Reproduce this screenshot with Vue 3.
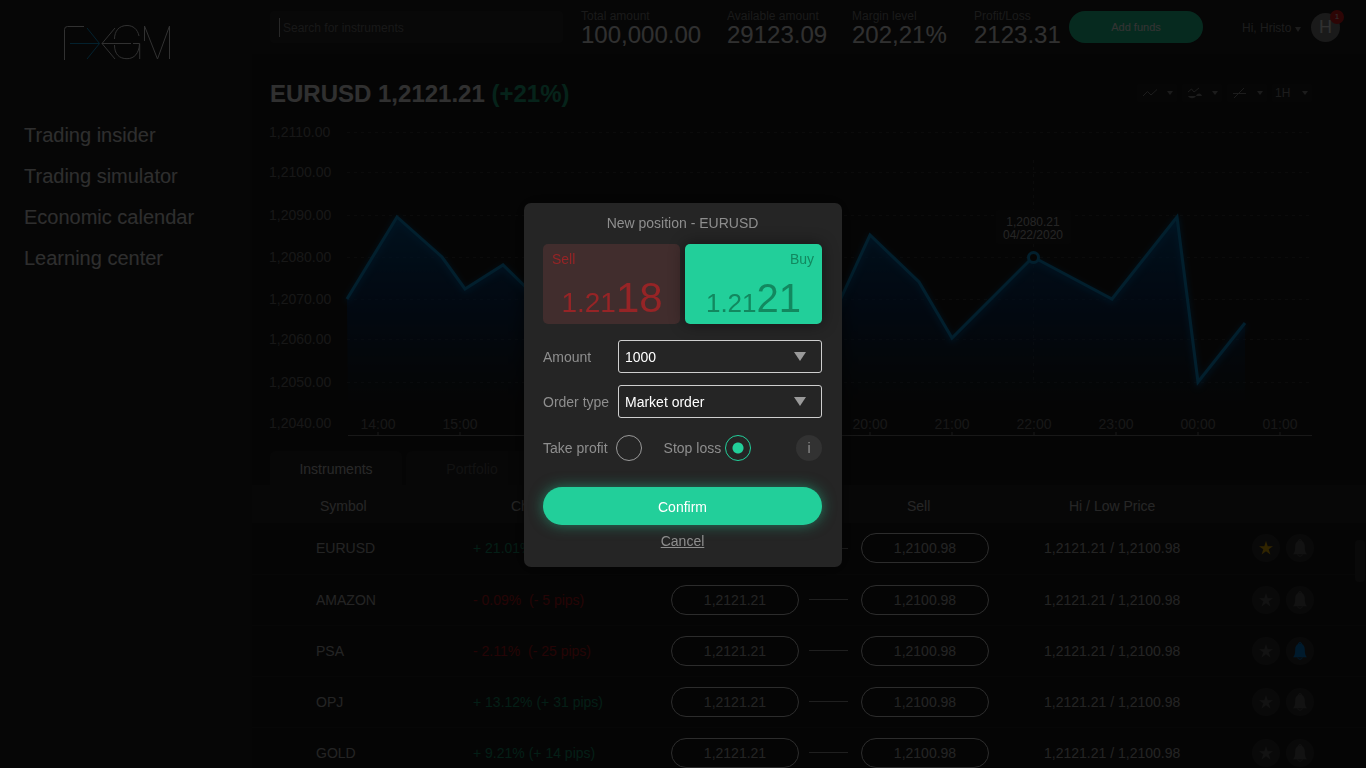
<!-- TradingDashboard -->
<template>
  <div class="dashboard">
    <aside class="sidebar">
      <svg class="logo" width="110" height="38" viewBox="62 24 110 38" role="img" aria-label="FXGM">
        <g class="logo-light">
          <path d="M64.5 60V29.5Q64.5 26.5 67.5 26.5H84" />
          <path d="M115 28L102 43.5L115 59M102 43.5H131" />
          <path d="M139 36C137.500 29 133 25.500 127 25.500C119 25.500 114.500 31 114.500 39M114.500 45C114.500 54 119 58.700 127 58.700C134.500 58.700 139 53 139.500 44" />
          <path d="M133 43.500H139.700V59" />
          <path d="M144.500 41V26L157.500 59L169.500 26V59" />
        </g>
        <path class="logo-blue" d="M70 43.5H99.5M87 28L99.5 43.5L87 59" />
      </svg>
      <nav class="menu">
        <a v-for="item in menu" :key="item" href="#">{{ item }}</a>
      </nav>
    </aside>

    <main class="main">
      <header class="topbar">
        <label class="search">
          <span class="caret"></span>
          <input type="text" placeholder="Search for instruments" aria-label="Search for instruments" />
        </label>
        <dl class="stats">
          <div v-for="stat in stats" :key="stat.label" class="stat">
            <dt>{{ stat.label }}</dt>
            <dd>{{ stat.value }}</dd>
          </div>
        </dl>
        <button type="button" class="add-funds">Add funds</button>
        <div class="user">
          <button type="button" class="user-menu">
            Hi, Hristo
            <svg width="6" height="5" viewBox="0 0 6 5"><path d="M0 0H6L3 5Z" fill="currentColor" /></svg>
          </button>
          <div class="avatar">H<span class="badge">1</span></div>
        </div>
      </header>

      <section class="chart-head">
        <h1>EURUSD 1,2121.21 <span class="up">(+21%)</span></h1>
        <div class="tools">
          <button type="button" aria-label="Chart type">
            <svg width="16" height="12" viewBox="0 0 16 12"><path class="line" d="M1 9L5.500 4.500L9 8L15 2.500" /></svg>
            <svg class="arrow" width="6" height="4" viewBox="0 0 6 4"><path d="M0 0H6L3 4Z" /></svg>
          </button>
          <button type="button" aria-label="Indicators">
            <svg width="16" height="12" viewBox="0 0 16 12">
              <path class="line" d="M1 5L4.500 2L7 5L12 1" />
              <path d="M1 9H15C14 6 11 5.500 9 9C7 12 3 12 1 9Z" />
            </svg>
            <svg class="arrow" width="6" height="4" viewBox="0 0 6 4"><path d="M0 0H6L3 4Z" /></svg>
          </button>
          <button type="button" aria-label="Drawing">
            <svg width="16" height="12" viewBox="0 0 16 12"><path class="line" d="M1 6.500H14M2 11L12 1" /></svg>
            <svg class="arrow" width="6" height="4" viewBox="0 0 6 4"><path d="M0 0H6L3 4Z" /></svg>
          </button>
          <button type="button" class="interval">
            1H
            <svg class="arrow" width="6" height="4" viewBox="0 0 6 4"><path d="M0 0H6L3 4Z" /></svg>
          </button>
        </div>
      </section>

      <!-- price chart -->
      <svg class="chart" viewBox="252 116 1114 324">
        <defs>
          <linearGradient id="area" x1="0" y1="216" x2="0" y2="405" gradientUnits="userSpaceOnUse">
            <stop offset="0" stop-color="#0067b5" stop-opacity="0.8" />
            <stop offset="0.5" stop-color="#003a85" stop-opacity="0.55" />
            <stop offset="1" stop-color="#003a70" stop-opacity="0" />
          </linearGradient>
        </defs>
        <g v-for="row in priceScale" :key="row.label">
          <text class="axis-text" x="269" :y="row.y + 5">{{ row.label }}</text>
          <line v-if="row.grid" class="grid" x1="347" x2="1309" :y1="row.y + 0.5" :y2="row.y + 0.5" />
        </g>
        <line class="grid" x1="1033.500" x2="1033.500" y1="160" y2="382" />
        <polygon :points="areaPoints" fill="url(#area)" />
        <polyline class="price-line" :points="linePoints" />
        <circle class="marker" cx="1033.500" cy="257.500" r="5" />
        <rect class="tip" x="996" y="210" width="75" height="34" rx="3" />
        <text class="tip-text" x="1033" y="226">1,2080.21</text>
        <text class="tip-text" x="1033" y="239">04/22/2020</text>
        <line class="axis" x1="348" x2="1312" y1="435.500" y2="435.500" />
        <g v-for="(hour, i) in hours" :key="hour">
          <text class="axis-text middle" :x="378 + i * 82" y="429">{{ hour }}</text>
          <line class="tick" :x1="378 + i * 82" :x2="378 + i * 82" y1="432" y2="435" />
        </g>
      </svg>

      <div class="tabs">
        <button type="button" class="tab active">Instruments</button>
        <button type="button" class="tab">Portfolio</button>
      </div>

      <div class="table-wrap">
        <table class="instruments">
          <thead>
            <tr>
              <th class="col-symbol">Symbol</th>
              <th class="col-change">Change</th>
              <th class="col-buy">Buy</th>
              <th class="col-sell">Sell</th>
              <th class="col-range">Hi / Low Price</th>
              <th></th>
            </tr>
          </thead>
          <tbody>
            <tr v-for="row in rows" :key="row.symbol">
              <td class="symbol">{{ row.symbol }}</td>
              <td class="change" :class="row.up ? 'up' : 'down'">{{ row.change }}</td>
              <td>
                <div class="buy-cell">
                  <button type="button" class="price">1,2121.21</button>
                  <span class="dash"></span>
                </div>
              </td>
              <td><button type="button" class="price">1,2100.98</button></td>
              <td class="range">1,2121.21 / 1,2100.98</td>
              <td>
                <div class="actions">
                  <button type="button" class="round" :class="{ starred: row.starred }" aria-label="Favourite">
                    <svg width="14" height="14" viewBox="0 0 14 14"><path d="M7 0L8.700 5.200H14L9.700 8.300L11.400 13.500L7 10.300L2.600 13.500L4.300 8.300L0 5.200H5.300Z" /></svg>
                  </button>
                  <button type="button" class="round" :class="{ alerted: row.alerted }" aria-label="Alert">
                    <svg width="14" height="18" viewBox="0 0 14 18">
                      <path d="M7 1.500C10.500 2 11.800 4.500 11.800 8C11.800 11.500 12.300 13.500 13.800 15.200H0.200C1.700 13.500 2.200 11.500 2.200 8C2.200 4.500 3.500 2 7 1.500Z" />
                      <circle class="ring" cx="7" cy="2" r="1.500" />
                      <path class="ring" d="M4.800 15.500C5 17.800 9 17.800 9.200 15.500" />
                    </svg>
                  </button>
                </div>
              </td>
            </tr>
          </tbody>
        </table>
        <span class="scroll-thumb"></span>
      </div>
    </main>

    <!-- new position dialog -->
    <div class="overlay">
      <form class="modal" role="dialog" aria-labelledby="modal-title" @submit.prevent>
        <h2 id="modal-title">New position - EURUSD</h2>
        <div class="sides">
          <button type="button" class="side sell">
            <span class="side-label">Sell</span>
            <span class="quote">1.21<b>18</b></span>
          </button>
          <button type="button" class="side buy">
            <span class="side-label">Buy</span>
            <span class="quote">1.21<b>21</b></span>
          </button>
        </div>
        <div class="field">
          <label for="amount">Amount</label>
          <div class="select-box">
            <select id="amount" v-model="amount">
              <option>1000</option>
              <option>5000</option>
            </select>
            <svg width="12" height="9" viewBox="0 0 12 9"><path d="M0 0H12L6 9Z" /></svg>
          </div>
        </div>
        <div class="field">
          <label for="order-type">Order type</label>
          <div class="select-box">
            <select id="order-type" v-model="orderType">
              <option>Market order</option>
              <option>Limit order</option>
            </select>
            <svg width="12" height="9" viewBox="0 0 12 9"><path d="M0 0H12L6 9Z" /></svg>
          </div>
        </div>
        <div class="options">
          <label class="take">Take profit <input v-model="exit" type="radio" name="exit" value="profit" /></label>
          <label class="stop">Stop loss <input v-model="exit" type="radio" name="exit" value="loss" /></label>
          <button type="button" class="info" aria-label="Info">i</button>
        </div>
        <button type="submit" class="confirm">Confirm</button>
        <a class="cancel" href="#">Cancel</a>
      </form>
    </div>
  </div>
</template>

<script setup>
import { ref } from "vue";

const amount = ref("1000");
const orderType = ref("Market order");
const exit = ref("loss");

const menu = ["Trading insider", "Trading simulator", "Economic calendar", "Learning center"];

const stats = [
  { label: "Total amount", value: "100,000.00" },
  { label: "Available amount", value: "29123.09" },
  { label: "Margin level", value: "202,21%" },
  { label: "Profit/Loss", value: "2123.31" },
];

const priceScale = [
  { label: "1,2110.00", y: 132, grid: true },
  { label: "1,2100.00", y: 172, grid: true },
  { label: "1,2090.00", y: 215, grid: true },
  { label: "1,2080.00", y: 257, grid: true },
  { label: "1,2070.00", y: 299, grid: true },
  { label: "1,2060.00", y: 339, grid: true },
  { label: "1,2050.00", y: 382, grid: true },
  { label: "1,2040.00", y: 423, grid: false },
];

const hours = ["14:00", "15:00", "16:00", "17:00", "18:00", "19:00", "20:00", "21:00", "22:00", "23:00", "00:00", "01:00"];

const prices = [
  [347, 299], [397, 217], [442, 257], [465, 289], [503, 265], [541, 302],
  [600, 270], [660, 320], [740, 260], [815, 355], [842, 296], [870, 235],
  [919, 282], [952, 338], [1033, 257], [1112, 299], [1177, 217], [1198, 382], [1245, 323],
];
const linePoints = prices.map((p) => p.join(",")).join(" ");
const areaPoints = `${linePoints} 1245,405 348,405`;

const rows = [
  { symbol: "EURUSD", change: "+ 21.01% (+ 50 pips)", up: true, starred: true },
  { symbol: "AMAZON", change: "- 0.09%  (- 5 pips)", up: false },
  { symbol: "PSA", change: "- 2.11%  (- 25 pips)", up: false, alerted: true },
  { symbol: "OPJ", change: "+ 13.12% (+ 31 pips)", up: true },
  { symbol: "GOLD", change: "+ 9.21% (+ 14 pips)", up: true },
];
</script>

<style>
body {
  background: #050505;
}
</style>

<style scoped>
.dashboard {
  display: flex;
  height: 100vh;
  overflow: hidden;
  background: #1b1b1b;
  color: #f0f0f0;
  font-family: "Liberation Sans", Arial, sans-serif;
  font-size: 14px;
}

button,
input,
select {
  margin: 0;
  padding: 0;
  border: 0;
  background: none;
  color: inherit;
  font: inherit;
}

/* 사이드바 */
.sidebar {
  flex: none;
  box-sizing: border-box;
  width: 252px;
  padding: 24px;
  background: #1f1f1f;
}

.logo {
  display: block;
  margin-left: 38px;
  fill: none;
  stroke-width: 1;
}

.logo-light {
  stroke: #f2f2f2;
}

.logo-blue {
  stroke: #10a6e6;
}

.menu {
  display: flex;
  flex-direction: column;
  gap: 17px;
  margin-top: 61px;
}

.menu a {
  color: #e6e6e6;
  font-size: 20px;
  line-height: 24px;
  text-decoration: none;
}

.main {
  position: relative;
  flex: 1;
  min-width: 0;
}

/* 상단 바 */
.topbar {
  display: flex;
  align-items: center;
  box-sizing: border-box;
  height: 54px;
  padding: 0 26px 0 18px;
  background: #1e1e1e;
}

.search {
  display: flex;
  flex: 1;
  align-items: center;
  height: 32px;
  margin-right: 18px;
  padding-left: 9px;
  border-radius: 4px;
  background: #2a2a2a;
}

.caret {
  width: 1px;
  height: 19px;
  margin-right: 3px;
  background: #c8c8c8;
}

.search input {
  flex: 1;
  min-width: 0;
  padding-top: 2px;
  outline: none;
  font-size: 12px;
}

.search input::placeholder {
  color: #787878;
  opacity: 1;
}

.stats {
  display: flex;
  margin: 0;
  padding-top: 2px;
}

.stat {
  width: 122px;
}

.stat:first-child {
  width: 146px;
}

.stat:nth-child(2) {
  width: 125px;
}

.stat:last-child {
  width: 95px;
}

.stat dt {
  color: #808080;
  font-size: 12px;
  line-height: 14px;
}

.stat dd {
  margin: 0;
  font-size: 24px;
  line-height: 24px;
}

.add-funds {
  width: 134px;
  height: 32px;
  border-radius: 16px;
  background: #22cf9a;
  color: #fff;
  font-size: 11px;
}

.user {
  display: flex;
  align-items: center;
  justify-content: space-between;
  width: 98px;
  margin-left: 39px;
}

.user-menu {
  padding-top: 2px;
  color: #8a8a8a;
  font-size: 12px;
}

.avatar {
  position: relative;
  width: 29px;
  height: 29px;
  border-radius: 50%;
  background: #808080;
  color: #f0f0f0;
  font-size: 18px;
  line-height: 29px;
  text-align: center;
}

.badge {
  position: absolute;
  top: -3px;
  right: -4px;
  width: 14px;
  height: 14px;
  border-radius: 50%;
  background: #e01a1a;
  font-size: 8px;
  line-height: 14px;
}

/* 차트 */
.chart-head {
  display: flex;
  align-items: center;
  justify-content: space-between;
  height: 62px;
  padding: 16px 54px 0 18px;
  box-sizing: border-box;
}

.chart-head h1 {
  margin: 0;
  padding-top: 2px;
  font-size: 24px;
  line-height: 28px;
}

.up {
  color: #1fae82;
}

.down {
  color: #d01c22;
}

.tools {
  display: flex;
  gap: 5px;
}

.tools button {
  display: flex;
  align-items: center;
  justify-content: space-between;
  width: 40px;
  height: 18px;
  padding: 0 4px 0 5px;
  border-radius: 3px;
  background: #212121;
  color: #8a8a8a;
  font-size: 12px;
}

.tools .interval {
  padding-left: 3px;
}

.tools svg {
  fill: #8a8a8a;
}

.tools .line {
  fill: none;
  stroke: #8a8a8a;
}

.chart {
  display: block;
  width: 100%;
  font-size: 14px;
}

.axis-text {
  fill: #737373;
}

.middle,
.tip-text {
  text-anchor: middle;
}

.grid {
  stroke: #383838;
  stroke-dasharray: 3 4;
}

.axis {
  stroke: #787878;
}

.tick {
  stroke: #4a4a4a;
  stroke-width: 2;
}

.price-line {
  fill: none;
  stroke: #0a9ce0;
  stroke-width: 3;
  filter: drop-shadow(0 2px 3px #0078c8);
}

.marker {
  fill: #1b1b1b;
  stroke: #0a9ce0;
  stroke-width: 3;
}

.tip {
  fill: #202020;
}

.tip-text {
  fill: #b8b8b8;
  font-size: 12px;
}

/* 종목 테이블 */
.tabs {
  display: flex;
  gap: 4px;
  margin-top: 11px;
  padding-left: 18px;
}

.tab {
  width: 132px;
  height: 34px;
  padding-top: 2px;
  border-radius: 6px 6px 0 0;
  background: #232323;
  color: #5a5a5a;
}

.tab.active {
  background: #262626;
  color: #c8c8c8;
}

.table-wrap {
  position: relative;
}

.instruments {
  width: 100%;
  table-layout: fixed;
  border-collapse: collapse;
}

.instruments th {
  height: 38px;
  padding-top: 4px;
  padding-bottom: 0;
  box-sizing: border-box;
  background: #272727;
  color: #bebebe;
  font-weight: normal;
  text-align: left;
}

.instruments td {
  box-sizing: border-box;
  height: 51px;
  padding: 0;
  border-bottom: 1px solid #252525;
  color: #b4b4b4;
}

.instruments .col-symbol {
  width: 221px;
  padding-left: 68px;
}

.instruments .col-change {
  width: 198px;
  padding-left: 38px;
}

.instruments .col-buy {
  width: 190px;
  padding-left: 52px;
}

.instruments .col-sell {
  width: 183px;
  padding-left: 46px;
}

.instruments .col-range {
  width: 208px;
  padding-left: 25px;
}

.instruments .symbol {
  padding-left: 64px;
}

.instruments .change {
  white-space: pre;
}

.instruments .change.up {
  color: #17966e;
}

.instruments .change.down {
  color: #b8181e;
}

.buy-cell {
  display: flex;
  align-items: center;
  gap: 10px;
}

.price {
  display: block;
  width: 128px;
  height: 30px;
  border: 1px solid #dcdcdc;
  border-radius: 15px;
}

.dash {
  width: 39px;
  height: 1px;
  background: #9a9a9a;
}

.actions {
  display: flex;
  gap: 6px;
}

.round {
  display: flex;
  align-items: center;
  justify-content: center;
  width: 28px;
  height: 28px;
  border-radius: 50%;
  background: #303030;
  fill: #5a5a5a;
  stroke: #5a5a5a;
}

.round path {
  stroke: none;
}

.round .ring {
  fill: none;
  stroke: inherit;
}

.starred {
  fill: #f0b400;
}

.alerted {
  fill: #0083dc;
  stroke: #0083dc;
}

.scroll-thumb {
  position: absolute;
  top: 55px;
  right: 1px;
  width: 10px;
  height: 42px;
  border-radius: 4px;
  background: #2e2e2e;
}

/* 주문 모달 */
.overlay {
  position: fixed;
  inset: 0;
  display: flex;
  align-items: center;
  justify-content: center;
  padding-top: 2px;
  background: rgba(0, 0, 0, 0.8);
}

.modal {
  box-sizing: border-box;
  width: 318px;
  padding: 10px 20px 16px 19px;
  border-radius: 7px;
  background: #252525;
  box-shadow: 0 0 18px rgba(0, 0, 0, 0.6);
  color: #8e8e8e;
  text-align: center;
}

.modal h2 {
  margin: 0 0 11px;
  font-size: 14px;
  font-weight: normal;
  line-height: 20px;
}

.sides {
  display: grid;
  grid-template-columns: 1fr 1fr;
  gap: 5px;
  margin-bottom: 16px;
}

.side {
  display: flex;
  flex-direction: column;
  justify-content: space-between;
  height: 80px;
  padding: 6px 8px 0;
  border-radius: 5px;
}

.side-label {
  line-height: 18px;
}

.quote {
  align-self: center;
  font-size: 28px;
  line-height: 42px;
}

.quote b {
  font-size: 42px;
  font-weight: normal;
}

.sell {
  align-items: flex-start;
  padding-left: 9px;
  background: #412d2d;
  color: #962426;
}

.buy {
  align-items: flex-end;
  background: #22cf9a;
  box-shadow: 0 0 16px rgba(0, 0, 0, 0.45);
  color: #12885f;
}

.buy .quote {
  font-size: 26px;
}

.buy .quote b {
  font-size: 40px;
}

.field {
  display: flex;
  align-items: center;
  justify-content: space-between;
  margin-bottom: 12px;
}

.select-box {
  position: relative;
  width: 204px;
}

.select-box select {
  display: block;
  appearance: none;
  box-sizing: border-box;
  width: 100%;
  height: 33px;
  padding: 0 6px;
  border: 1px solid #cfcfcf;
  border-radius: 3px;
  color: #fff;
}

.select-box svg {
  position: absolute;
  top: 12px;
  right: 16px;
  fill: #9a9a9a;
  pointer-events: none;
}

.options {
  display: flex;
  align-items: center;
  margin-top: 17px;
}

.options label {
  display: flex;
  align-items: center;
}

.take {
  gap: 8px;
}

.stop {
  gap: 4px;
  margin-left: 22px;
}

.options input {
  appearance: none;
  box-sizing: border-box;
  width: 26px;
  height: 26px;
  border: 1px solid #9a9a9a;
  border-radius: 50%;
}

.options input:checked {
  border-color: #22cf9a;
  background: radial-gradient(circle, #22cf9a 5px, transparent 6px);
}

.info {
  width: 26px;
  height: 26px;
  margin-left: auto;
  border-radius: 50%;
  background: #323232;
}

.confirm {
  display: block;
  width: 100%;
  height: 38px;
  margin: 26px 0 6px;
  padding-top: 2px;
  border-radius: 19px;
  background: #22cf9a;
  box-shadow: 0 0 14px rgba(34, 207, 154, 0.5);
  color: #fff;
}

.cancel {
  color: inherit;
  line-height: 20px;
}
</style>
